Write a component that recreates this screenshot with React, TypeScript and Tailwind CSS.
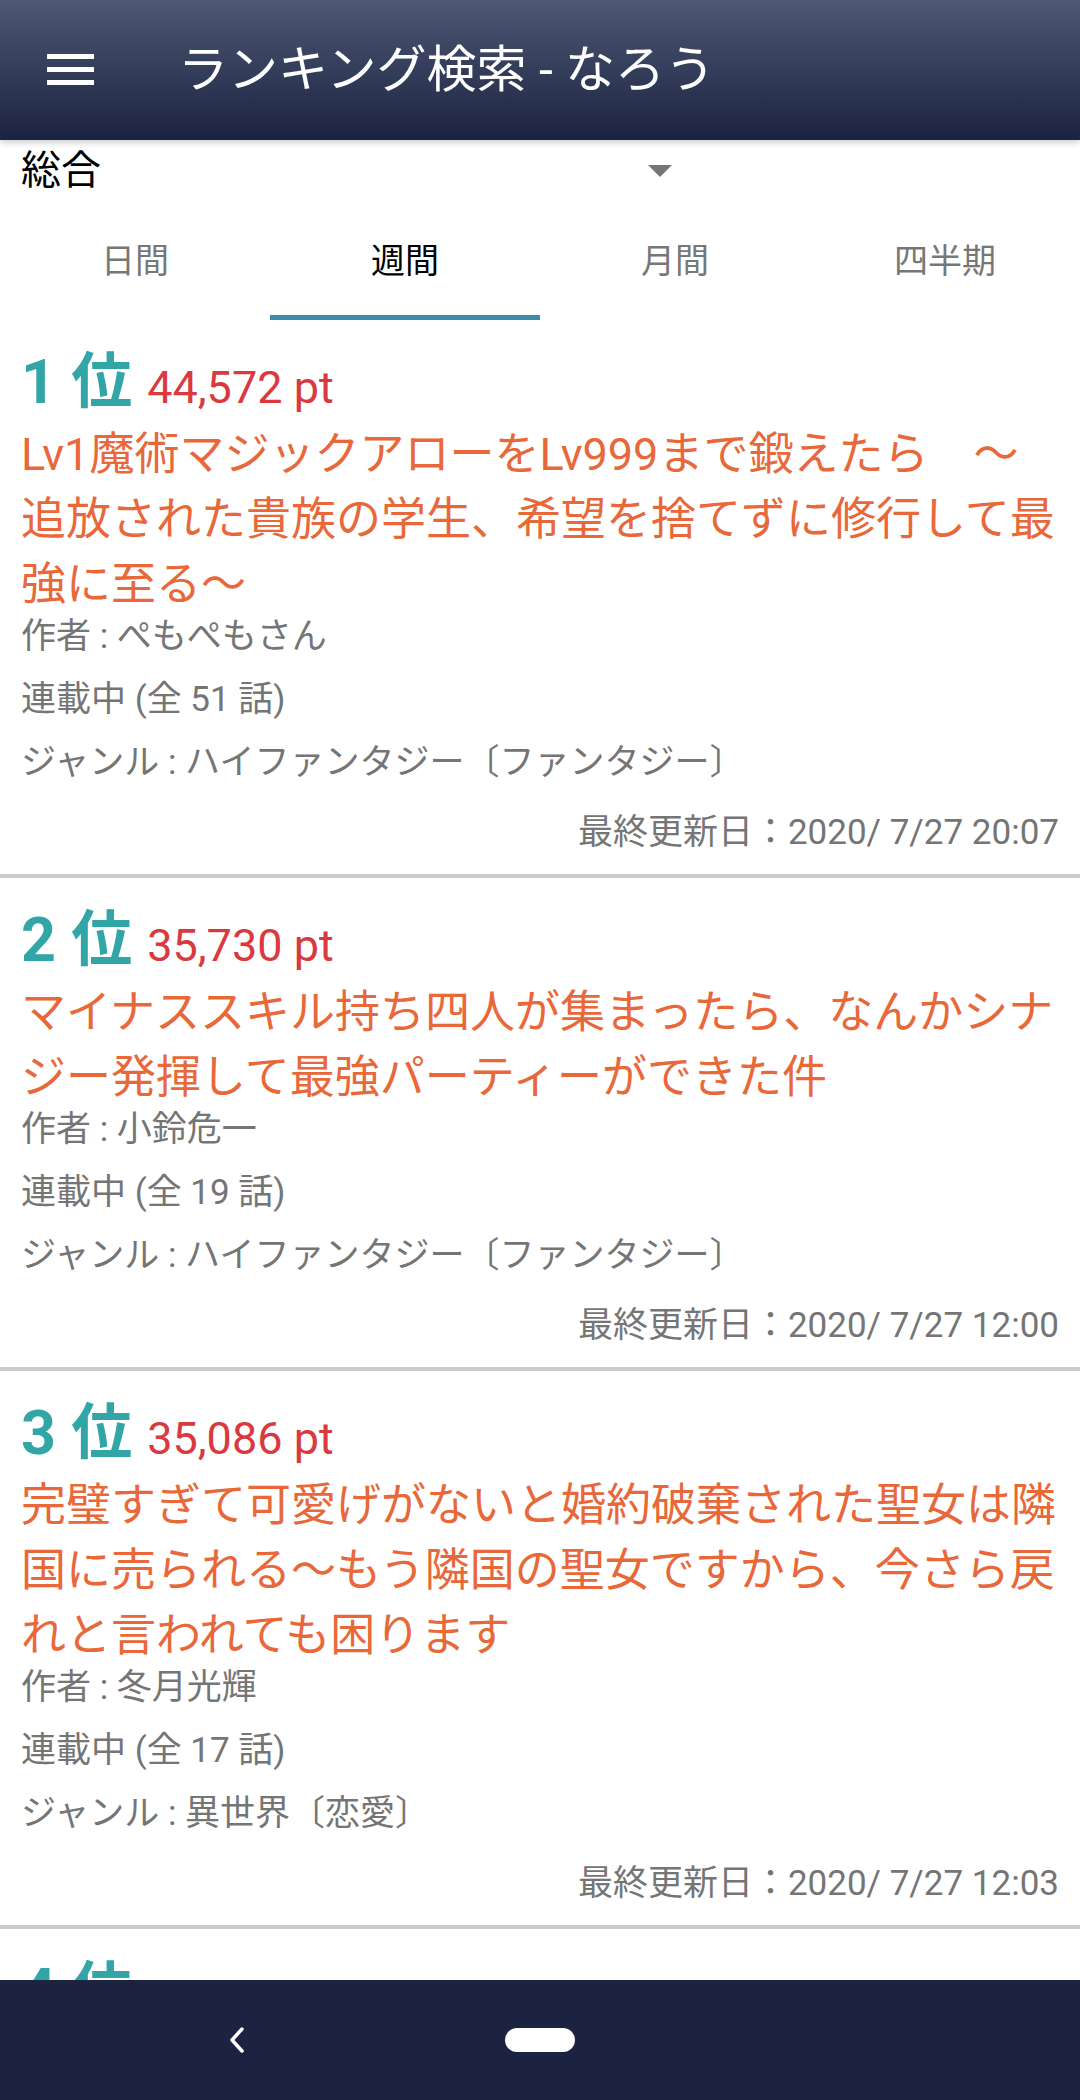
import React from "react"

interface Novel {
    rank: number
    points: string
    title: string
    author: string
    episodes: number
    genre: string
    updated: string
}

const novels: Novel[] = [
    {
        rank: 1,
        points: "44,572",
        title: "Lv1魔術マジックアローをLv999まで鍛えたら　～追放された貴族の学生、希望を捨てずに修行して最強に至る～",
        author: "ぺもぺもさん",
        episodes: 51,
        genre: "ハイファンタジー〔ファンタジー〕",
        updated: "2020/ 7/27 20:07",
    },
    {
        rank: 2,
        points: "35,730",
        title: "マイナススキル持ち四人が集まったら、なんかシナジー発揮して最強パーティーができた件",
        author: "小鈴危一",
        episodes: 19,
        genre: "ハイファンタジー〔ファンタジー〕",
        updated: "2020/ 7/27 12:00",
    },
    {
        rank: 3,
        points: "35,086",
        title: "完璧すぎて可愛げがないと婚約破棄された聖女は隣国に売られる～もう隣国の聖女ですから、今さら戻れと言われても困ります",
        author: "冬月光輝",
        episodes: 17,
        genre: "異世界〔恋愛〕",
        updated: "2020/ 7/27 12:03",
    },
    {
        rank: 4,
        points: "33,912",
        title: "ランキング作品",
        author: "なろう",
        episodes: 10,
        genre: "ハイファンタジー〔ファンタジー〕",
        updated: "2020/ 7/27 18:00",
    },
]

const tabs = ["日間", "週間", "月間", "四半期"]

const font = "font-['Roboto','Noto_Sans_CJK_JP',sans-serif]"

const NovelCard = ({ novel }: { novel: Novel }) => {
    return (
        <div className="px-[21px] pt-[28px] pb-[21px]">
            <div className="flex items-baseline leading-[68px]">
                <span className="text-[61px] font-bold text-[#32a6a6]">
                    {novel.rank} 位
                </span>
                <span className="ml-[15px] text-[45px] text-[#d93a3f]">
                    {novel.points} pt
                </span>
            </div>
            <div className="text-[45px] leading-[65px] text-[#e8683a]">
                {novel.title}
            </div>
            <div className="flex flex-col gap-[23px] text-[35px] leading-[40px] text-[#757575]">
                <div>作者 : {novel.author}</div>
                <div>連載中 (全 {novel.episodes} 話)</div>
                <div>ジャンル : {novel.genre}</div>
            </div>
            <div className="mt-[30px] text-right text-[35px] leading-[40px] text-[#757575]">
                最終更新日：{novel.updated}
            </div>
        </div>
    )
}

export default function App() {
    return (
        <div className={`${font} w-[1080px] h-[2100px] flex flex-col overflow-hidden bg-white`}>
            <header className="relative z-10 h-[140px] shrink-0 flex items-center bg-gradient-to-b from-[#4e5974] to-[#1c2340] shadow-[0_3px_6px_rgba(0,0,0,0.18)]">
                <svg className="ml-[47px]" width="47" height="34" viewBox="0 0 47 34">
                    <rect x="0" y="1" width="47" height="5" fill="#fff" />
                    <rect x="0" y="14" width="47" height="5" fill="#fff" />
                    <rect x="0" y="27" width="47" height="5" fill="#fff" />
                </svg>
                <h1 className="ml-[84px] text-[50px] text-white">ランキング検索 - なろう</h1>
            </header>

            <div className="h-[62px] w-[690px] shrink-0 flex items-center justify-between pl-[21px] pr-[18px]">
                <span className="text-[40px] text-black">総合</span>
                <svg width="24" height="12" viewBox="0 0 24 12">
                    <path d="M0 0 L24 0 L12 12 Z" fill="#757575" />
                </svg>
            </div>

            <div className="h-[118px] shrink-0 flex">
                {tabs.map((tab) => (
                    <div
                        key={tab}
                        className={`flex-1 flex items-center justify-center pt-[5px] border-b-[5px] text-[34px] ${
                            tab === "週間" ? "border-[#3a8fa7] text-black" : "border-transparent text-[#777777]"
                        }`}
                    >
                        {tab}
                    </div>
                ))}
            </div>

            <div className="flex-1 overflow-hidden">
                {novels.map((novel, i) => (
                    <div key={novel.rank}>
                        {i > 0 && <div className="h-[4px] bg-[#cccccc]" />}
                        <NovelCard novel={novel} />
                    </div>
                ))}
            </div>

            <nav className="h-[120px] shrink-0 flex items-center bg-[#1c2340]">
                <svg className="ml-[228px]" width="18" height="26" viewBox="0 0 18 26">
                    <path d="M14 2 L4 13 L14 24" fill="none" stroke="#fff" strokeWidth="3.5" strokeLinecap="round" strokeLinejoin="round" />
                </svg>
                <div className="ml-[259px] w-[70px] h-[24px] rounded-full bg-white" />
            </nav>
        </div>
    )
}
